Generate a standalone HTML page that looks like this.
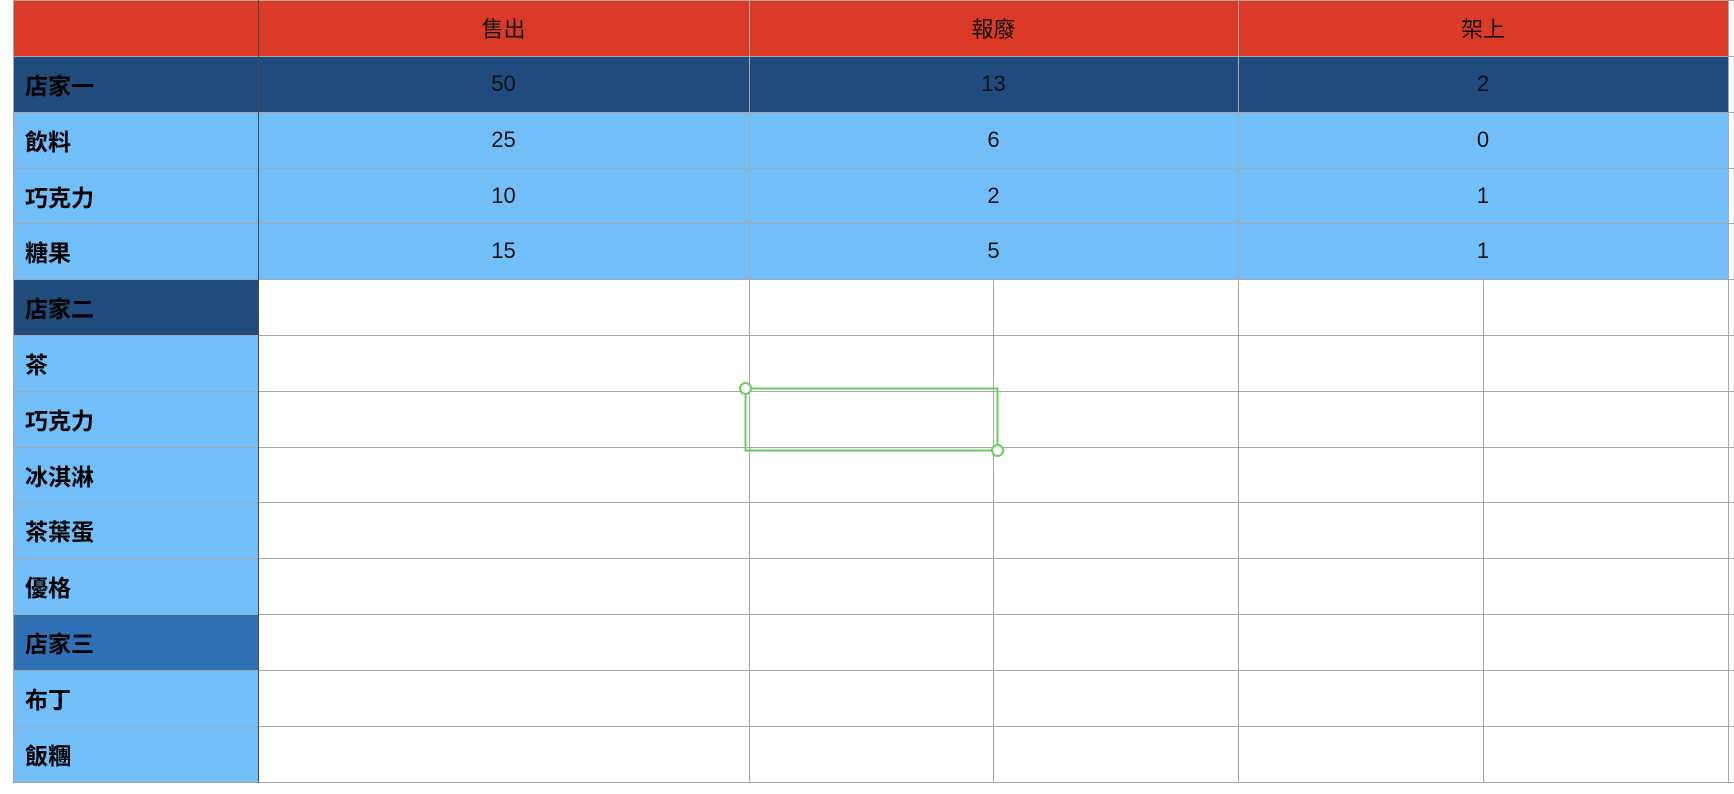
<!DOCTYPE html>
<html><head><meta charset="utf-8"><style>
body{margin:0;width:1734px;height:794px;background:#fff;position:relative;overflow:hidden;font-family:"Liberation Sans","Noto Sans CJK TC",sans-serif}
.c{position:absolute;box-sizing:border-box;display:flex;align-items:center}
.h{position:absolute;height:1px;background:#a8a8a8}
.v{position:absolute;width:1px;background:#a8a8a8}
.l{font-weight:bold;font-size:23px;padding-left:12px;color:#000}
.n{justify-content:center;font-size:22px;color:#111}
</style></head><body>
<div class="c" style="left:13px;top:0;width:1715px;height:56px;background:#DB3A26"></div>
<div class="c" style="left:13px;top:56px;width:1715px;height:56px;background:#1F4C7D"></div>
<div class="c" style="left:13px;top:112px;width:1715px;height:167px;background:#72BEF8"></div>
<div class="c" style="left:13px;top:279px;width:245px;height:56px;background:#1F4C7D"></div>
<div class="c" style="left:13px;top:335px;width:245px;height:279px;background:#72BEF8"></div>
<div class="c" style="left:13px;top:614px;width:245px;height:56px;background:#3071B6"></div>
<div class="c" style="left:13px;top:670px;width:245px;height:112px;background:#72BEF8"></div>
<div class="h" style="left:13px;top:0;width:1721px"></div>
<div class="h" style="left:13px;top:56px;width:1721px"></div>
<div class="h" style="left:13px;top:112px;width:1721px"></div>
<div class="h" style="left:13px;top:168px;width:1721px"></div>
<div class="h" style="left:13px;top:223px;width:1721px"></div>
<div class="h" style="left:13px;top:279px;width:1721px"></div>
<div class="h" style="left:13px;top:335px;width:1721px"></div>
<div class="h" style="left:13px;top:391px;width:1721px"></div>
<div class="h" style="left:13px;top:447px;width:1721px"></div>
<div class="h" style="left:13px;top:502px;width:1721px"></div>
<div class="h" style="left:13px;top:558px;width:1721px"></div>
<div class="h" style="left:13px;top:614px;width:1721px"></div>
<div class="h" style="left:13px;top:670px;width:1721px"></div>
<div class="h" style="left:13px;top:726px;width:1721px"></div>
<div class="h" style="left:13px;top:782px;width:1721px"></div>
<div class="v" style="left:13px;top:0;height:783px"></div>
<div class="v" style="left:258px;top:0;height:783px;background:#4a4a4a"></div>
<div class="v" style="left:749px;top:0;height:783px"></div>
<div class="v" style="left:1238px;top:0;height:783px"></div>
<div class="v" style="left:1728px;top:0;height:783px"></div>
<div class="v" style="left:993px;top:279px;height:504px"></div>
<div class="v" style="left:1483px;top:279px;height:504px"></div>
<div class="c n" style="left:258px;top:0;width:491px;height:56px;font-size:22px">售出</div>
<div class="c n" style="left:749px;top:0;width:489px;height:56px;font-size:22px">報廢</div>
<div class="c n" style="left:1238px;top:0;width:490px;height:56px;font-size:22px">架上</div>
<div class="c l" style="left:13px;top:56px;width:245px;height:56px">店家一</div>
<div class="c l" style="left:13px;top:112px;width:245px;height:56px">飲料</div>
<div class="c l" style="left:13px;top:168px;width:245px;height:56px">巧克力</div>
<div class="c l" style="left:13px;top:223px;width:245px;height:56px">糖果</div>
<div class="c l" style="left:13px;top:279px;width:245px;height:56px">店家二</div>
<div class="c l" style="left:13px;top:335px;width:245px;height:56px">茶</div>
<div class="c l" style="left:13px;top:391px;width:245px;height:56px">巧克力</div>
<div class="c l" style="left:13px;top:447px;width:245px;height:56px">冰淇淋</div>
<div class="c l" style="left:13px;top:502px;width:245px;height:56px">茶葉蛋</div>
<div class="c l" style="left:13px;top:558px;width:245px;height:56px">優格</div>
<div class="c l" style="left:13px;top:614px;width:245px;height:56px">店家三</div>
<div class="c l" style="left:13px;top:670px;width:245px;height:56px">布丁</div>
<div class="c l" style="left:13px;top:726px;width:245px;height:56px">飯糰</div>
<div class="c n" style="left:258px;top:56px;width:491px;height:56px">50</div>
<div class="c n" style="left:749px;top:56px;width:489px;height:56px">13</div>
<div class="c n" style="left:1238px;top:56px;width:490px;height:56px">2</div>
<div class="c n" style="left:258px;top:112px;width:491px;height:56px">25</div>
<div class="c n" style="left:749px;top:112px;width:489px;height:56px">6</div>
<div class="c n" style="left:1238px;top:112px;width:490px;height:56px">0</div>
<div class="c n" style="left:258px;top:168px;width:491px;height:56px">10</div>
<div class="c n" style="left:749px;top:168px;width:489px;height:56px">2</div>
<div class="c n" style="left:1238px;top:168px;width:490px;height:56px">1</div>
<div class="c n" style="left:258px;top:223px;width:491px;height:56px">15</div>
<div class="c n" style="left:749px;top:223px;width:489px;height:56px">5</div>
<div class="c n" style="left:1238px;top:223px;width:490px;height:56px">1</div>
<svg style="position:absolute;left:0;top:0" width="1734" height="794">
<rect x="745.5" y="388.5" width="252" height="62" fill="none" stroke="#66D05A" stroke-width="2"/>
<circle cx="745.5" cy="388.5" r="5.5" fill="#fff" stroke="#66D05A" stroke-width="2"/>
<circle cx="997.5" cy="450.5" r="5.5" fill="#fff" stroke="#66D05A" stroke-width="2"/>
</svg>
</body></html>
